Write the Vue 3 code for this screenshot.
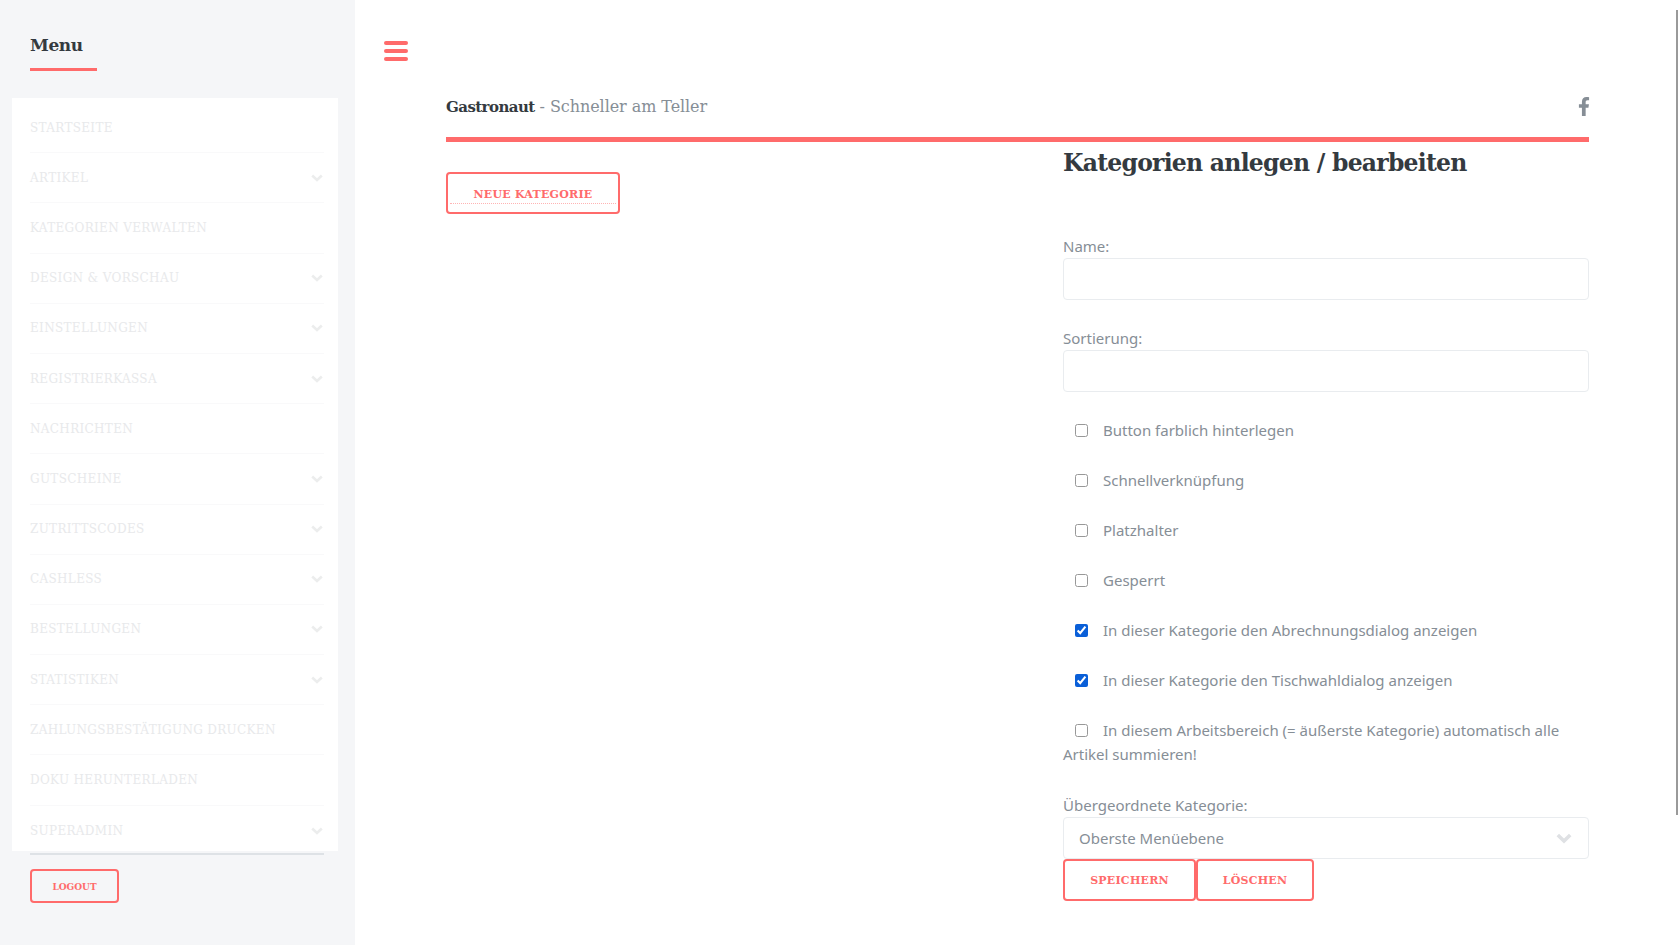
<script setup>
const menu = [
  ['STARTSEITE', false], ['ARTIKEL', true], ['KATEGORIEN VERWALTEN', false], ['DESIGN & VORSCHAU', true],
  ['EINSTELLUNGEN', true], ['REGISTRIERKASSA', true], ['NACHRICHTEN', false], ['GUTSCHEINE', true],
  ['ZUTRITTSCODES', true], ['CASHLESS', true], ['BESTELLUNGEN', true], ['STATISTIKEN', true],
  ['ZAHLUNGSBESTÄTIGUNG DRUCKEN', false], ['DOKU HERUNTERLADEN', false], ['SUPERADMIN', true]
]
const checks = [
  ['Button farblich hinterlegen', false], ['Schnellverknüpfung', false], ['Platzhalter', false], ['Gesperrt', false],
  ['In dieser Kategorie den Abrechnungsdialog anzeigen', true], ['In dieser Kategorie den Tischwahldialog anzeigen', true]
]
</script>

<template>
  <div class="page">
    <aside class="sidebar">
      <div class="menu-head"><h3 class="menu-title">Menu</h3></div>
      <ul class="menu">
        <li v-for="m in menu" :key="m[0]" class="menu-item">
          <span>{{ m[0] }}</span>
          <svg v-if="m[1]" class="chev" viewBox="0 0 12 8" width="12" height="8"><path d="M1.2 1.5 6 6 10.8 1.5" fill="none" stroke="currentColor" stroke-width="2.6"/></svg>
        </li>
      </ul>
      <div class="side-foot"><button class="btn btn-small">LOGOUT</button></div>
    </aside>
    <main class="main">
      <button class="burger" aria-label="Menü"><i></i><i></i><i></i></button>
      <div class="content">
        <header class="top">
          <div class="brand"><b>Gastronaut</b> - Schneller am Teller</div>
          <svg class="fb" viewBox="0 0 320 512" width="12" height="19"><path fill="currentColor" d="M279.14 288l14.22-92.66h-88.91v-60.13c0-25.35 12.42-50.06 52.24-50.06h40.42V6.26S260.43 0 225.36 0c-73.22 0-121.08 44.38-121.08 124.72v70.62H22.89V288h81.39v224h100.17V288z"/></svg>
        </header>
        <div class="columns">
          <div class="left">
            <button class="btn btn-new"><span class="new-label">NEUE KATEGORIE</span></button>
          </div>
          <form class="right" @submit.prevent>
            <h2 class="title">Kategorien anlegen / bearbeiten</h2>
            <label class="field first"><span class="lab">Name:</span><input class="input" type="text"></label>
            <label class="field second"><span class="lab">Sortierung:</span><input class="input" type="text"></label>
            <div class="checks">
              <label v-for="c in checks" :key="c[0]" class="check"><input type="checkbox" :checked="c[1]"><span>{{ c[0] }}</span></label>
              <label class="check wrap"><input type="checkbox"><span>In diesem Arbeitsbereich (= äußerste Kategorie) automatisch alle Artikel summieren!</span></label>
            </div>
            <div class="field third">
              <span class="lab">Übergeordnete Kategorie:</span>
              <div class="select">
                <span>Oberste Menüebene</span>
                <svg viewBox="0 0 16 11" width="16" height="11"><path d="M1.8 2 8 8 14.2 2" fill="none" stroke="currentColor" stroke-width="3.6"/></svg>
              </div>
            </div>
            <div class="actions">
              <button class="btn btn-save">SPEICHERN</button><button class="btn btn-del">LÖSCHEN</button>
            </div>
          </form>
        </div>
      </div>
    </main>
    <div class="scrollbar"></div>
  </div>
</template>

<style>
html, body { margin: 0; background: #fff; overflow: hidden; }
</style>

<style scoped>
.page { display: flex; width: 1680px; height: 945px; overflow: hidden; position: relative; font-family: "Noto Sans", "Open Sans", sans-serif; color: #868e96; background: #fff; }
.sidebar { width: 355px; flex: none; background: #f5f6f8; box-sizing: border-box; padding: 0 0 0 12px; }
.menu-head { height: 98px; box-sizing: border-box; padding: 33px 0 0 18px; }
.menu-title { margin: 0; width: 67px; height: 38px; box-sizing: border-box; border-bottom: 3px solid #ff6b6b; font: 700 17px/25px "DejaVu Serif", serif; color: #343a40; letter-spacing: -0.4px; }
.menu { list-style: none; margin: 0; padding: 5px 14px 0 18px; width: 326px; box-sizing: border-box; background: #fff; height: 753px; overflow: hidden; }
.menu-item { height: 50.2px; box-sizing: border-box; display: flex; align-items: center; justify-content: space-between; border-bottom: 1px solid #f9f9fa; padding-right: 1px; font: 400 12px/16px "DejaVu Serif", serif; letter-spacing: 0.33px; color: #e8e9eb; }
.menu-item:last-child { border-bottom: 0; }
.chev { color: #eceded; }
.side-foot { margin: 2px 15px 0 18px; width: 294px; border-top: 2px solid #dee2e6; padding-top: 14px; }
.btn { background: transparent; border: 2px solid #ff6b6b; border-radius: 4px; color: #ff6b6b; font-family: "DejaVu Serif", serif; font-weight: 700; padding: 0; box-sizing: border-box; cursor: pointer; }
.btn-small { display: block; width: 89px; height: 34px; font-size: 9px; letter-spacing: 0; padding-top: 1px; }
.main { flex: 1; min-width: 0; padding: 41px 91px 0 29px; box-sizing: border-box; }
.burger { display: flex; flex-direction: column; gap: 4px; width: 24px; padding: 0; border: 0; background: none; height: 20px; }
.burger i { display: block; width: 24px; height: 4px; border-radius: 2px; background: #ff6b6b; }
.content { margin: 31px 0 0 62px; }
.top { height: 45px; display: flex; justify-content: space-between; border-bottom: 5px solid #ff6b6b; box-sizing: content-box; }
.brand { font: 400 16px/30px "DejaVu Serif", serif; letter-spacing: -0.07px; height: 30px; }
.brand b { color: #343a40; font-size: 15px; letter-spacing: -0.57px; }
.fb { color: #868e96; margin-top: 5px; margin-right: -1px; }
.columns { display: grid; grid-template-columns: 617px 526px; }
.left { padding-top: 30px; }
.btn-new { width: 174px; height: 42px; position: relative; font-size: 11px; letter-spacing: 0.25px; padding-top: 3px; }
.new-label { display: block; }
.btn-new::after { content: ""; position: absolute; left: 2px; right: 2px; top: 29px; border-top: 1px dotted #ffb4b4; }
.title { margin: 5px 0 0; font: 700 23.5px/33px "DejaVu Serif", serif; color: #343a40; letter-spacing: -0.75px; }
.field { display: block; }
.field.first { margin-top: 54px; }
.field.second { margin-top: 26px; }
.field.third { margin-top: 27px; }
.lab { display: block; font-size: 15px; line-height: 24px; }
.input { display: block; width: 100%; height: 42px; box-sizing: border-box; border: 1px solid #e9ecef; border-radius: 4px; background: #fff; padding: 0 15px; outline: 0; }
.checks { margin-top: 26px; }
.check { display: block; padding-left: 12px; font-size: 15px; line-height: 24px; margin-bottom: 26px; }
.check input { width: 13px; height: 13px; margin: 0 15px 0 0; vertical-align: -1px; accent-color: #0a5fd8; }
.check input:not(:checked) { opacity: 0.75; }
.check.wrap { padding-left: 0; text-indent: 12px; margin-bottom: 0; }
.select { display: flex; justify-content: space-between; align-items: center; height: 42px; box-sizing: border-box; border: 1px solid #e9ecef; border-radius: 4px; padding: 0 16px 0 15px; font-size: 15px; }
.select svg { color: #dfe1e4; }
.actions { display: flex; }
.btn-save { width: 133px; height: 42px; font-size: 11px; letter-spacing: 0.25px; }
.btn-del { width: 118px; height: 42px; font-size: 11px; letter-spacing: 0.25px; }
.scrollbar { position: absolute; right: 2px; top: 10px; width: 2px; height: 805px; background: #9a9a9a; }
</style>
